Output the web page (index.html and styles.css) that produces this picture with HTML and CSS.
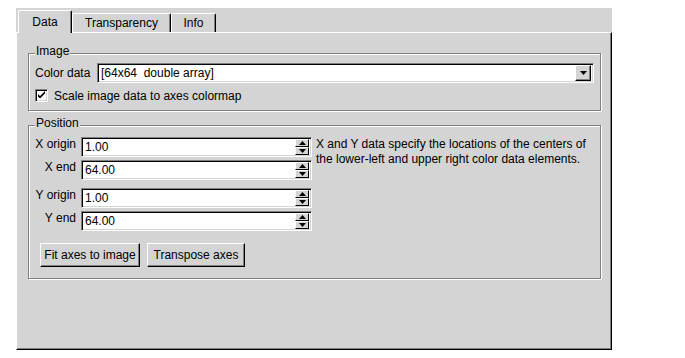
FILE: index.html
```html
<!DOCTYPE html>
<html lang="en">
<head>
    <meta charset="UTF-8">
    <title>Image properties</title>
    <link rel="stylesheet" href="styles.css">
</head>
<body>
<div class="window">
    <div class="tabs">
        <div class="tab tab-data active">Data</div>
        <div class="tab tab-transparency">Transparency</div>
        <div class="tab tab-info">Info</div>
    </div>
    <div class="panel">
        <fieldset class="group image-group">
            <legend>Image</legend>
            <div class="color-row">
                <span class="color-label">Color data</span>
                <div class="combo">
                    <span class="combo-text">[64x64  double array]</span>
                    <span class="drop-btn">
                        <svg width="7" height="4" viewBox="0 0 7 4"><path d="M0 0h7L3.5 4z" fill="#000"/></svg>
                    </span>
                </div>
            </div>
            <div class="check-row">
                <span class="checkbox">
                    <svg width="9" height="9" viewBox="0 0 9 9"><path d="M1 3l2 2 5-5v2.5l-5 5-2-2z" fill="#000"/></svg>
                </span>
                <span>Scale image data to axes colormap</span>
            </div>
        </fieldset>
        <fieldset class="group position-group">
            <legend>Position</legend>
            <div class="position-body">
                <div class="fields">
                    <div class="field">
                        <span class="field-label">X origin</span>
                        <div class="spin">
                            <span class="spin-text">1.00</span>
                            <span class="spin-btns">
                                <span class="spin-btn"><svg width="7" height="4" viewBox="0 0 7 4"><path d="M3.5 0L7 4H0z" fill="#000"/></svg></span>
                                <span class="spin-btn"><svg width="7" height="4" viewBox="0 0 7 4"><path d="M0 0h7L3.5 4z" fill="#000"/></svg></span>
                            </span>
                        </div>
                    </div>
                    <div class="field">
                        <span class="field-label">X end</span>
                        <div class="spin">
                            <span class="spin-text">64.00</span>
                            <span class="spin-btns">
                                <span class="spin-btn"><svg width="7" height="4" viewBox="0 0 7 4"><path d="M3.5 0L7 4H0z" fill="#000"/></svg></span>
                                <span class="spin-btn"><svg width="7" height="4" viewBox="0 0 7 4"><path d="M0 0h7L3.5 4z" fill="#000"/></svg></span>
                            </span>
                        </div>
                    </div>
                    <div class="field field-gap">
                        <span class="field-label">Y origin</span>
                        <div class="spin">
                            <span class="spin-text">1.00</span>
                            <span class="spin-btns">
                                <span class="spin-btn"><svg width="7" height="4" viewBox="0 0 7 4"><path d="M3.5 0L7 4H0z" fill="#000"/></svg></span>
                                <span class="spin-btn"><svg width="7" height="4" viewBox="0 0 7 4"><path d="M0 0h7L3.5 4z" fill="#000"/></svg></span>
                            </span>
                        </div>
                    </div>
                    <div class="field">
                        <span class="field-label">Y end</span>
                        <div class="spin">
                            <span class="spin-text">64.00</span>
                            <span class="spin-btns">
                                <span class="spin-btn"><svg width="7" height="4" viewBox="0 0 7 4"><path d="M3.5 0L7 4H0z" fill="#000"/></svg></span>
                                <span class="spin-btn"><svg width="7" height="4" viewBox="0 0 7 4"><path d="M0 0h7L3.5 4z" fill="#000"/></svg></span>
                            </span>
                        </div>
                    </div>
                </div>
                <p class="note">X and Y data specify the locations of the centers of<br>the lower-left and upper right color data elements.</p>
            </div>
            <div class="buttons">
                <button class="btn btn-fit">Fit axes to image</button>
                <button class="btn btn-transpose">Transpose axes</button>
            </div>
        </fieldset>
    </div>
</div>
</body>
</html>
```

FILE: styles.css
```css
* {
    box-sizing: border-box;
}

body {
    margin: 0;
    background-color: #ffffff;
    font-family: "Liberation Sans", Arial, sans-serif;
    font-size: 12px;
    color: #000000;
}

.window {
    margin: 8px 0 0 16px;
    width: 596px;
    height: 342px;
    background-color: #d4d4d4;
    display: flex;
    flex-direction: column;
}

.tabs {
    height: 24px;
    display: flex;
    align-items: flex-end;
    padding-left: 2px;
}

.tab {
    height: 19px;
    line-height: 19px;
    text-align: center;
    border-top: 1px solid #ffffff;
    border-left: 1px solid #ffffff;
    border-right: 1px solid #000000;
    border-radius: 2px 2px 0 0;
    box-shadow: inset -1px 0 0 #808080;
}

.tab.active {
    height: 23px;
    line-height: 22px;
    margin-bottom: -1px;
    position: relative;
    z-index: 1;
    background-color: #d4d4d4;
}

.tab-data {
    width: 54px;
}

.tab-transparency {
    width: 99px;
}

.tab-info {
    width: 45px;
}

.panel {
    height: 318px;
    border-top: 1px solid #ffffff;
    border-left: 1px solid #ffffff;
    border-right: 1px solid #000000;
    border-bottom: 1px solid #000000;
    box-shadow: inset -1px -1px 0 #808080;
    padding: 0 10px 0 11px;
}

.group {
    margin: 0;
    min-width: 0;
    border: 1px solid #808080;
    box-shadow: inset 1px 1px 0 #ffffff, 1px 1px 0 #ffffff;
    padding: 0 6px;
}

.group legend {
    padding: 0 1px 5px;
    line-height: 14px;
    background-color: #d4d4d4;
}

.image-group {
    margin-top: 11px;
    padding-bottom: 8px;
}

.position-group {
    margin-top: 5px;
    padding-top: 2px;
    padding-bottom: 11px;
}

.color-row {
    display: flex;
    align-items: center;
    height: 20px;
}

.color-label {
    width: 62px;
}

.combo,
.spin {
    flex: 1;
    height: 20px;
    display: flex;
    align-items: center;
    justify-content: space-between;
    background-color: #ffffff;
    border: 1px solid;
    border-color: #808080 #ffffff #ffffff #808080;
    box-shadow: inset 1px 1px 0 #000000, inset -1px -1px 0 #d4d4d4;
    padding: 2px 2px 2px 3px;
}

.combo-text {
    white-space: pre;
}

.drop-btn {
    width: 16px;
    height: 16px;
    display: flex;
    align-items: center;
    justify-content: center;
    background-color: #d4d4d4;
    border-top: 1px solid #ffffff;
    border-left: 1px solid #ffffff;
    border-right: 1px solid #000000;
    border-bottom: 1px solid #000000;
    box-shadow: inset -1px -1px 0 #808080;
}

.check-row {
    display: flex;
    align-items: center;
    gap: 6px;
    height: 13px;
    margin-top: 6px;
}

.checkbox {
    width: 13px;
    height: 13px;
    display: flex;
    align-items: center;
    justify-content: center;
    background-color: #ffffff;
    border: 1px solid;
    border-color: #808080 #ffffff #ffffff #808080;
    box-shadow: inset 1px 1px 0 #000000, inset -1px -1px 0 #d4d4d4;
}

.position-body {
    display: flex;
    align-items: flex-start;
}

.fields {
    width: 277px;
    display: flex;
    flex-direction: column;
    gap: 3px;
}

.field {
    display: flex;
    align-items: flex-start;
    gap: 5px;
}

.field.field-gap {
    margin-top: 5px;
}

.field-label {
    width: 41px;
    text-align: right;
    white-space: nowrap;
    line-height: 14px;
}

.spin {
    padding-right: 2px;
}

.spin-btns {
    display: flex;
    flex-direction: column;
}

.spin-btn {
    width: 14px;
    height: 8px;
    display: flex;
    align-items: center;
    justify-content: center;
    background-color: #d4d4d4;
    border-top: 1px solid #ffffff;
    border-left: 1px solid #ffffff;
    border-right: 1px solid #000000;
    border-bottom: 1px solid #000000;
}

.note {
    margin: 0 0 0 4px;
    line-height: 15px;
    white-space: nowrap;
}

.buttons {
    display: flex;
    gap: 7px;
    margin: 12px 0 0 5px;
}

.btn {
    height: 24px;
    padding: 0;
    font-family: "Liberation Sans", Arial, sans-serif;
    font-size: 12px;
    color: #000000;
    background-color: #d4d4d4;
    border-top: 1px solid #ffffff;
    border-left: 1px solid #ffffff;
    border-right: 1px solid #000000;
    border-bottom: 1px solid #000000;
    box-shadow: inset -1px -1px 0 #808080;
}

.btn-fit {
    width: 100px;
}

.btn-transpose {
    width: 98px;
}
```
